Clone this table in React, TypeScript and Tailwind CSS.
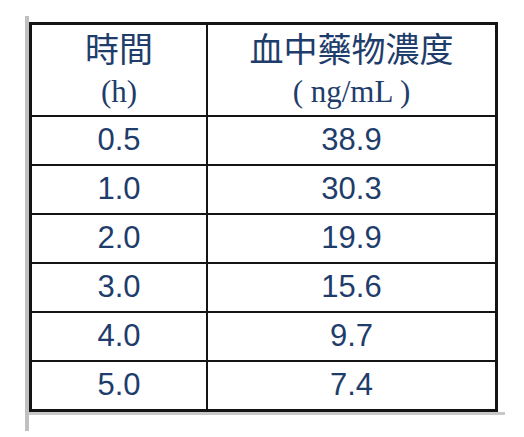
import { Fragment } from "react";

const rows = [
  { t: "0.5", c: "38.9" },
  { t: "1.0", c: "30.3" },
  { t: "2.0", c: "19.9" },
  { t: "3.0", c: "15.6" },
  { t: "4.0", c: "9.7" },
  { t: "5.0", c: "7.4" },
];

const cjk = "font-['Noto_Sans_CJK_TC','Noto_Sans_CJK_SC',sans-serif]";
const serif = "font-['Liberation_Serif',serif]";
const num = "font-['Liberation_Sans',Arial,sans-serif]";

export default function App() {
  return (
    <div className="w-[524px] h-[437px] bg-white pt-4 pl-[25px]">
      {/* gray page edge on the left */}
      <div className="h-[415px] border-l-4 border-[#c0c0c0] pt-[6px]">
        <div className="w-[469px] border-[3px] border-[#141414] bg-[#141414]">
          <div className="grid grid-cols-[174px_287px] grid-rows-[90px_repeat(6,47px)] gap-[2px] text-[#1f3d6b]">
            {/* header */}
            <div className="bg-white flex flex-col items-center pt-[3px]">
              <span className={`${cjk} text-[34px] leading-[40px]`}>時間</span>
              <span className={`${serif} text-[31px] leading-[40px] mt-1`}>(h)</span>
            </div>
            <div className="bg-white flex flex-col items-center pt-[3px]">
              <span className={`${cjk} text-[34px] leading-[40px]`}>血中藥物濃度</span>
              <span className={`${serif} text-[31px] leading-[40px] mt-1 whitespace-pre`}>( ng/mL )</span>
            </div>

            {rows.map((r) => (
              <Fragment key={r.t}>
                <div className={`bg-white flex items-center justify-center ${num} text-[31px]`}>
                  {r.t}
                </div>
                <div className={`bg-white flex items-center justify-center ${num} text-[31px]`}>
                  {r.c}
                </div>
              </Fragment>
            ))}
          </div>
        </div>
        {/* drop shadow under the table */}
        <div className="h-[3px] w-[476px] bg-[#c8c8c8]" />
      </div>
    </div>
  );
}
